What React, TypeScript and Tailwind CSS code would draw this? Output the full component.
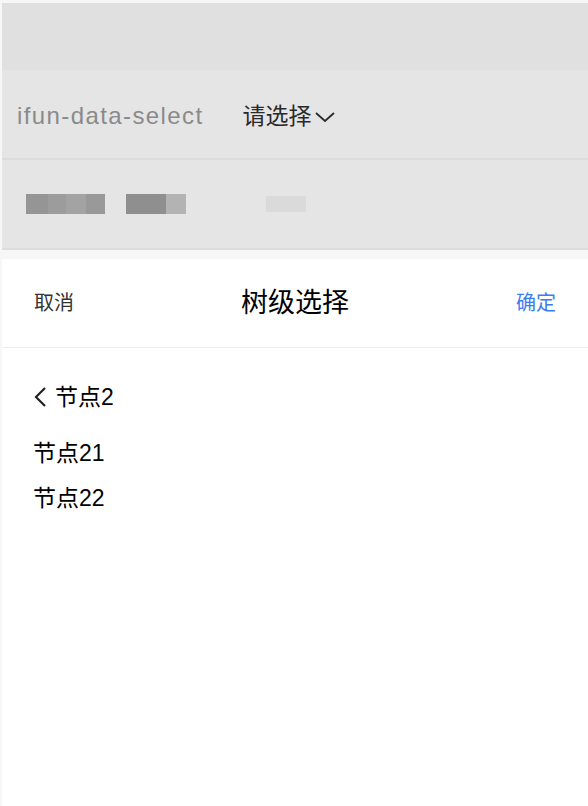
const FONT = { fontFamily: '"Liberation Sans", "Noto Sans CJK SC", sans-serif' };

// ── Blurred placeholder row ───────────────────────────────

function Mosaic() {
  return (
    <div className="flex items-center pl-[24px]">
      <div className="flex h-[20px]">
        <div className="w-[22px] bg-[#959595]" />
        <div className="w-[18px] bg-[#9c9c9c]" />
        <div className="w-[20px] bg-[#a3a3a3]" />
        <div className="w-[19px] bg-[#999999]" />
      </div>
      <div className="ml-[21px] flex h-[20px]">
        <div className="w-[40px] bg-[#8f8f8f]" />
        <div className="w-[20px] bg-[#b3b3b3]" />
      </div>
      <div className="ml-[80px] flex h-[16px]">
        <div className="w-[40px] bg-[#dadada]" />
      </div>
    </div>
  );
}

export default function App() {
  return (
    <div
      className="flex h-[806px] w-[588px] flex-col overflow-hidden bg-[#f7f7f7] pl-[2px] pt-[3px]"
      style={FONT}
    >
      {/* Backdrop page */}
      <div className="flex flex-col bg-[#e0e0e0]">
        <div className="h-[67px] bg-[#e0e0e0]" />
        <div className="flex h-[90px] items-center border-b-2 border-[#dcdcdc] bg-[#e5e5e5] pl-[15px] pt-[4px]">
          <span className="text-[24px] tracking-[1.4px] text-[#8a8a8a]">ifun-data-select</span>
          <span className="ml-[39px] text-[23px] text-[#2a2a2a]">请选择</span>
          <svg width="24" height="14" viewBox="0 0 24 14" className="ml-[1px] mt-[2px]">
            <path d="M3 3l9 8 9-8" fill="none" stroke="#2a2a2a" strokeWidth="1.8" />
          </svg>
        </div>
        <div className="flex h-[90px] items-center border-b-2 border-[#dcdcdc] bg-[#e5e5e5]">
          <Mosaic />
        </div>
      </div>

      {/* Bottom sheet */}
      <div className="mt-[9px] flex flex-1 flex-col bg-white">
        <div className="flex h-[89px] items-center justify-between border-b border-[#eeeeee] pl-[32px] pr-[32px]">
          <span className="text-[20px] text-[#333333]">取消</span>
          <span className="text-[27px] text-black">树级选择</span>
          <span className="text-[20px] text-[#3b7cf0]">确定</span>
        </div>
        <div className="flex flex-col px-[30px] pt-[32px]">
          <div className="flex items-center">
            <svg width="16" height="24" viewBox="0 0 16 24">
              <path d="M13 3l-9 9 9 9" fill="none" stroke="#222222" strokeWidth="2.2" />
            </svg>
            <span className="ml-[7px] text-[23px] text-black">节点2</span>
          </div>
          <span className="mt-[21px] pl-[1px] text-[23px] text-black">节点21</span>
          <span className="mt-[11px] pl-[1px] text-[23px] text-black">节点22</span>
        </div>
      </div>
    </div>
  );
}
